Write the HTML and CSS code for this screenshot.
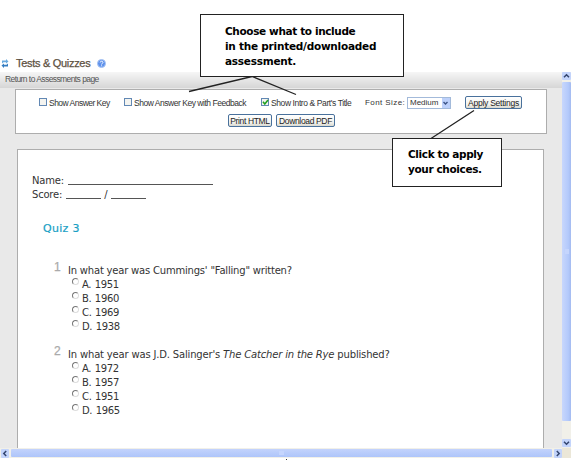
FILE: index.html
```
<!DOCTYPE html>
<html lang="en">
<head>
<meta charset="utf-8">
<title>Tests &amp; Quizzes</title>
<link rel="stylesheet" href="styles.css">
</head>
<body>
<header class="title">
  <svg class="refresh" width="8" height="9" viewBox="0 0 8 9"><path d="M1 4.500V1.500h4V0l2.500 2.500L5 4.500V3.200H2.500z" fill="#69a9de"/><path d="M7 4.500v3H3V9L.5 6.500 3 4.500v1.300h2.500z" fill="#347cc0"/></svg>
  <h1>Tests &amp; Quizzes</h1>
  <svg class="help" width="9" height="9" viewBox="0 0 9 9"><circle cx="4.5" cy="4.5" r="4" fill="#5f92ec" stroke="#a9c4f2"/><path d="M3.2 3.500c0-1.800 2.800-1.700 2.700 0 0 .9-1.300.9-1.300 2M4.600 6.400v.9" fill="none" stroke="#fff"/></svg>
</header>
<div class="window">
  <main class="content">
    <nav class="crumb"><span>Return to Assessments page</span></nav>
    <section class="settings">
      <div class="options">
        <label class="opt key"><i class="box"></i><span>Show Answer Key</span></label>
        <label class="opt feedback"><i class="box"></i><span>Show Answer Key with Feedback</span></label>
        <label class="opt intro"><i class="box"><svg width="7" height="7" viewBox="0 0 7 7"><path d="M1 2.8 2.8 5 6 1" fill="none" stroke="#21a121" stroke-width="1.6"/></svg></i><span>Show Intro &amp; Part's Title</span></label>
        <span class="size-label">Font Size:</span>
        <span class="select"><span>Medium</span><i><svg width="7" height="8" viewBox="0 0 7 8"><path d="M1.5 3 3.5 5 5.5 3" fill="none" stroke="#3d5587" stroke-width="1.4"/></svg></i></span>
        <button class="btn apply">Apply Settings</button>
      </div>
      <div class="actions"><button class="btn print">Print HTML</button><button class="btn pdf">Download PDF</button></div>
    </section>
    <section class="paper">
      <p class="field name"><span>Name:</span><i class="long"></i></p>
      <p class="field"><span>Score:</span><i class="short"></i><b>/</b><i class="short"></i></p>
      <h2>Quiz 3</h2>
      <article class="question">
        <span class="num">1</span>
        <div><p class="q1">In what year was Cummings' "Falling" written?</p>
          <ul><li><i></i>A. 1951</li><li><i></i>B. 1960</li><li><i></i>C. 1969</li><li><i></i>D. 1938</li></ul></div>
      </article>
      <article class="question">
        <span class="num">2</span>
        <div><p class="q2">In what year was J.D. Salinger's <em>The Catcher in the Rye</em> published?</p>
          <ul><li><i></i>A. 1972</li><li><i></i>B. 1957</li><li><i></i>C. 1951</li><li><i></i>D. 1965</li></ul></div>
      </article>
    </section>
  </main>
  <div class="vbar">
    <span class="arrow"><svg width="9" height="8" viewBox="0 0 9 8"><path d="M2 5.2 4.5 2.8 7 5.2" /></svg></span>
    <span class="vthumb"><i></i></span>
    <span class="arrow end"><svg width="9" height="8" viewBox="0 0 9 8"><path d="M2 2.8 4.5 5.2 7 2.8" /></svg></span>
  </div>
  <div class="hbar">
    <span class="arrow"><svg width="8" height="9" viewBox="0 0 8 9"><path d="M5.2 2 2.8 4.5 5.2 7" /></svg></span>
    <span class="hthumb"><i></i></span>
    <span class="arrow"><svg width="8" height="9" viewBox="0 0 8 9"><path d="M2.8 2 5.2 4.5 2.8 7" /></svg></span>
  </div>
  <div class="corner"></div>
</div>
<i class="speck"></i>
<svg class="leaders" width="574" height="461" viewBox="0 0 574 461"><path d="M189 91.500 252 76.500 296 94.500M474 110.500 431 138.500" fill="none" stroke="#222" stroke-width="1.3"/></svg>
<aside class="callout include"><span class="tight">Choose what to include</span><span>in the printed/downloaded</span><span>assessment.</span></aside>
<aside class="callout click"><span class="tight">Click to apply</span><span class="tight">your choices.</span></aside>
</body>
</html>
```
FILE: styles.css
```
* { box-sizing: border-box; }
body { margin: 0; width: 574px; height: 461px; overflow: hidden; background: #fff; position: relative; font-family: "Liberation Sans", Arial, sans-serif; color: #333; }
h1, h2, p, ul { margin: 0; padding: 0; font-weight: normal; }
i { font-style: normal; display: block; flex: none; }
svg { display: block; flex: none; }
span { white-space: nowrap; }

.title { height: 72px; padding: 53px 0 0 1px; display: flex; align-items: center; }
.title h1 { width: 75px; margin: 0 6px 0 7px; font-size: 11px; line-height: 18px; letter-spacing: -.3px; color: #5d5142; white-space: nowrap; -webkit-text-stroke: .25px #5d5142; }
.title .refresh, .title .help { margin-top: 2px; }

.window { display: grid; grid-template-columns: 562px 9px; grid-template-rows: 376px 10px; }
.content { background: #e9e9e9; overflow: hidden; }
.crumb { height: 16px; padding-left: 5px; background: linear-gradient(#f6f6f6, #d6d6d6); font-size: 8.500px; line-height: 15px; color: #555; }
.crumb span { letter-spacing: -.6px; word-spacing: .2px; }

.settings { width: 532px; height: 45px; margin: 1px 0 0 15px; border: 1px solid #adadad; background: #fff; font-size: 8.500px; }
.options { height: 23px; padding: 2px 0 0 23px; display: flex; align-items: center; }
.opt { display: flex; align-items: center; gap: 2px; }
.key { width: 85px; letter-spacing: -.52px; }
.feedback { width: 137px; letter-spacing: -.47px; }
.intro { width: 104px; letter-spacing: -.4px; }
.box { width: 8px; height: 8px; margin-top: -1px; border: 1px solid #6288b4; background: #f4f4f0; }
.box svg { margin: -.5px; }
.size-label { width: 42px; font-size: 8px; letter-spacing: .42px; }
.select { width: 44px; height: 12px; border: 1px solid #a3bada; display: flex; justify-content: space-between; align-items: center; padding-left: 2px; font-size: 8px; letter-spacing: 0; }
.select i { width: 8px; height: 10px; padding-top: 1px; background: #bdd1fb; }
.btn { height: 13px; margin: 0; padding: 0; border: 1px solid #49719c; border-radius: 2px; background: linear-gradient(#fff, #f1f1ec 70%, #d9d8cf); font: 8.500px/10px "Liberation Sans", Arial, sans-serif; color: #222; white-space: nowrap; letter-spacing: -.35px; }
.apply { width: 57px; margin-left: 14px; letter-spacing: -.25px; }
.actions { display: flex; gap: 4px; padding: 1px 0 0 212px; }
.print { width: 44px; }
.pdf { width: 59px; }

.paper { width: 527px; height: 300px; margin: 15px 0 0 17px; padding: 24px 0 0 14px; border: 1px solid #adadad; border-bottom: 0; background: #fff; font-family: "DejaVu Sans", Verdana, sans-serif; font-size: 10px; }
.field { height: 14px; line-height: 14px; display: flex; letter-spacing: -.2px; }
.field i { height: 11px; border-bottom: 1px solid #555; }
.field .long { width: 145px; margin-left: 4px; }
.field .short { width: 35px; margin-left: 4px; }
.field b { font-weight: normal; margin-left: 3px; }
.field b + .short { margin-left: 4px; }
.paper h2 { margin: 18px 0 0 11px; font-size: 11px; line-height: 18px; letter-spacing: .3px; color: #18a0c4; -webkit-text-stroke: .2px #18a0c4; }
.question { display: flex; margin-left: 22px; height: 84px; }
h2 + .question { margin-top: 21px; }
.num { width: 14px; font: 12px/16px "Liberation Sans", Arial, sans-serif; color: #aaa; -webkit-text-stroke: .25px #aaa; }
.question p { padding-top: 5px; line-height: 14px; white-space: nowrap; }
.q1 { letter-spacing: -.2px; }
.q2 { letter-spacing: -.17px; }
.question ul { list-style: none; padding-left: 4px; letter-spacing: -.35px; word-spacing: .7px; }
.question li { display: flex; height: 14px; line-height: 14px; gap: 3px; }
.question li i { width: 7px; height: 7px; border: 1px solid; border-color: #777 #ddd #ddd #777; border-radius: 50%; }

.vbar { background: #f1f0e9; display: flex; flex-direction: column; }
.arrow { background: #c3d4fb; border-radius: 1px; flex: none; }
.arrow path { fill: none; stroke: #34466f; stroke-width: 1.5; }
.vthumb { height: 339px; flex: none; margin-top: 2px; border-radius: 1px; background: linear-gradient(90deg, #c8d7fc, #b3c9fb 70%, #a4bbf0); display: flex; align-items: center; justify-content: center; }
.vthumb i { width: 4px; height: 5px; background: #c5d5fd; }
.end { margin-top: auto; margin-bottom: 1px; }
.hbar { display: flex; align-items: center; gap: 2px; padding-left: 1px; background: #f1f0e9; }
.hthumb { height: 8px; flex: 1; border-radius: 1px; background: linear-gradient(#c3d3fc, #aec5fa); display: flex; align-items: center; justify-content: center; }
.hthumb i { width: 5px; height: 4px; background: #c5d5fd; }
.corner { background: #ebe7d8; }
.speck { width: 1px; height: 1px; margin: 1px 0 0 286px; background: #333; }

.leaders { position: absolute; left: 0; top: 0; }
.callout { position: absolute; border: 1px solid #222; background: #fff; display: flex; flex-direction: column; font: bold 10.500px/15px "DejaVu Sans", Verdana, sans-serif; letter-spacing: -.24px; color: #000; }
.callout .tight { letter-spacing: -.37px; }
.include { left: 200px; top: 14px; width: 204px; height: 63px; padding: 9px 0 0 24px; }
.click { left: 392px; top: 138px; width: 110px; height: 49px; padding: 8px 0 0 15px; }
```
